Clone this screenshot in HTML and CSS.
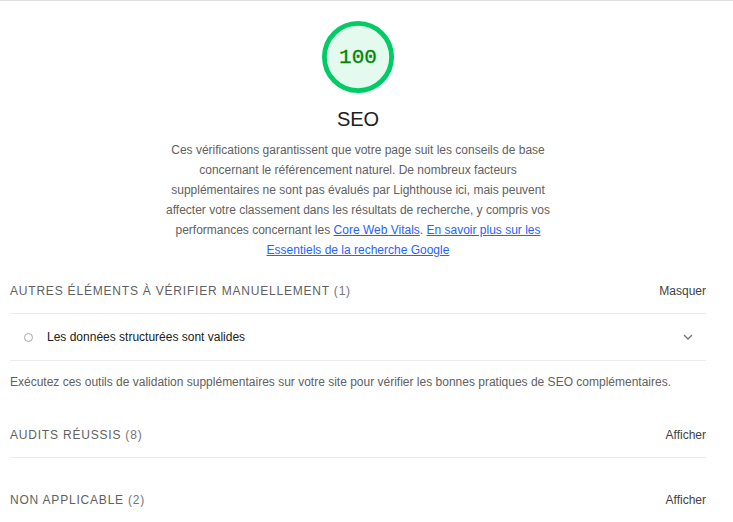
FILE: index.html
```html
<!DOCTYPE html>
<html lang="fr">
<head>
<meta charset="utf-8">
<title>SEO</title>
<link rel="stylesheet" href="styles.css">
</head>
<body>
<div class="page">
  <div class="report">
    <header class="cat-header">
      <div class="gauge">
        <svg class="gauge-svg" viewBox="0 0 120 120" width="72" height="72">
          <circle cx="60" cy="60" r="56" fill="#e5faef" stroke="#00cc66" stroke-width="8"/>
        </svg>
        <span class="gauge-value">100</span>
      </div>
      <div class="gauge-label">SEO</div>
      <p class="cat-desc">Ces vérifications garantissent que votre page suit les conseils de base concernant le référencement naturel. De nombreux facteurs supplémentaires ne sont pas évalués par Lighthouse ici, mais peuvent affecter votre classement dans les résultats de recherche, y compris vos performances concernant les <a href="#">Core Web Vitals</a>. <a href="#">En savoir plus sur les Essentiels de la recherche Google</a></p>
    </header>

    <section class="group">
      <div class="group-header first">
        <span class="group-title">Autres éléments à vérifier manuellement <span class="count">(1)</span></span>
        <span class="toggle">Masquer</span>
      </div>
      <div class="audit">
        <span class="audit-icon"></span>
        <span class="audit-title">Les données structurées sont valides</span>
        <svg class="chevron" viewBox="0 0 10 6" width="10" height="6"><path d="M1 1l4 4 4-4" fill="none" stroke="#757575" stroke-width="1.3"/></svg>
      </div>
      <p class="group-desc">Exécutez ces outils de validation supplémentaires sur votre site pour vérifier les bonnes pratiques de SEO complémentaires.</p>
    </section>

    <section class="group">
      <div class="group-header passed">
        <span class="group-title">Audits réussis <span class="count">(8)</span></span>
        <span class="toggle">Afficher</span>
      </div>
    </section>

    <section class="group">
      <div class="group-header na">
        <span class="group-title">Non applicable <span class="count">(2)</span></span>
        <span class="toggle">Afficher</span>
      </div>
    </section>
  </div>
</div>
</body>
</html>
```

FILE: styles.css
```css
html, body {
  margin: 0;
  padding: 0;
  background: #fff;
}
body {
  font-family: "Liberation Sans", Arial, sans-serif;
  color: #212121;
  font-size: 12px;
}
.page {
  border-top: 1px solid #e0e0e0;
  min-height: 521px;
}
.report {
  margin-left: 10px;
  width: 696px;
}
.cat-header {
  display: flex;
  flex-direction: column;
  align-items: center;
  padding-top: 20px;
}
.gauge {
  position: relative;
  width: 72px;
  height: 72px;
}
.gauge-svg {
  display: block;
}
.gauge-value {
  position: absolute;
  inset: 0;
  display: flex;
  align-items: center;
  justify-content: center;
  font-family: "Liberation Mono", "DejaVu Sans Mono", monospace;
  font-size: 21px;
  color: #008800;
  -webkit-text-stroke: 0.3px #008800;
}
.gauge-label {
  margin-top: 13px;
  font-size: 20px;
  line-height: 26px;
  color: #212121;
}
.cat-desc {
  margin: 8px 0 0;
  max-width: 400px;
  text-align: center;
  line-height: 20px;
  color: #616161;
}
.cat-desc a {
  color: #2962ff;
  text-decoration: underline;
}
.group-header {
  display: flex;
  justify-content: space-between;
  align-items: center;
  height: 44px;
  border-bottom: 1px solid #ebebeb;
}
.group-header.first {
  margin-top: 9px;
}
.group-header.passed {
  margin-top: 21px;
}
.group-header.na {
  margin-top: 20px;
  border-bottom: none;
}
.group-title {
  text-transform: uppercase;
  letter-spacing: 0.8px;
  color: #616161;
  font-size: 12px;
}
.count {
  color: #757575;
}
.toggle {
  color: #424242;
  font-size: 12px;
}
.audit {
  display: flex;
  align-items: center;
  height: 46px;
  border-bottom: 1px solid #ebebeb;
  padding: 0 13px 0 14px;
}
.audit-icon {
  width: 7px;
  height: 7px;
  border: 1.5px solid #a8a8a8;
  border-radius: 50%;
  flex: none;
}
.audit-title {
  margin-left: 14px;
  flex: 1;
  color: #212121;
}
.chevron {
  display: block;
  flex: none;
}
.group-desc {
  margin: 11px 0 0;
  line-height: 20px;
  color: #616161;
}
```
